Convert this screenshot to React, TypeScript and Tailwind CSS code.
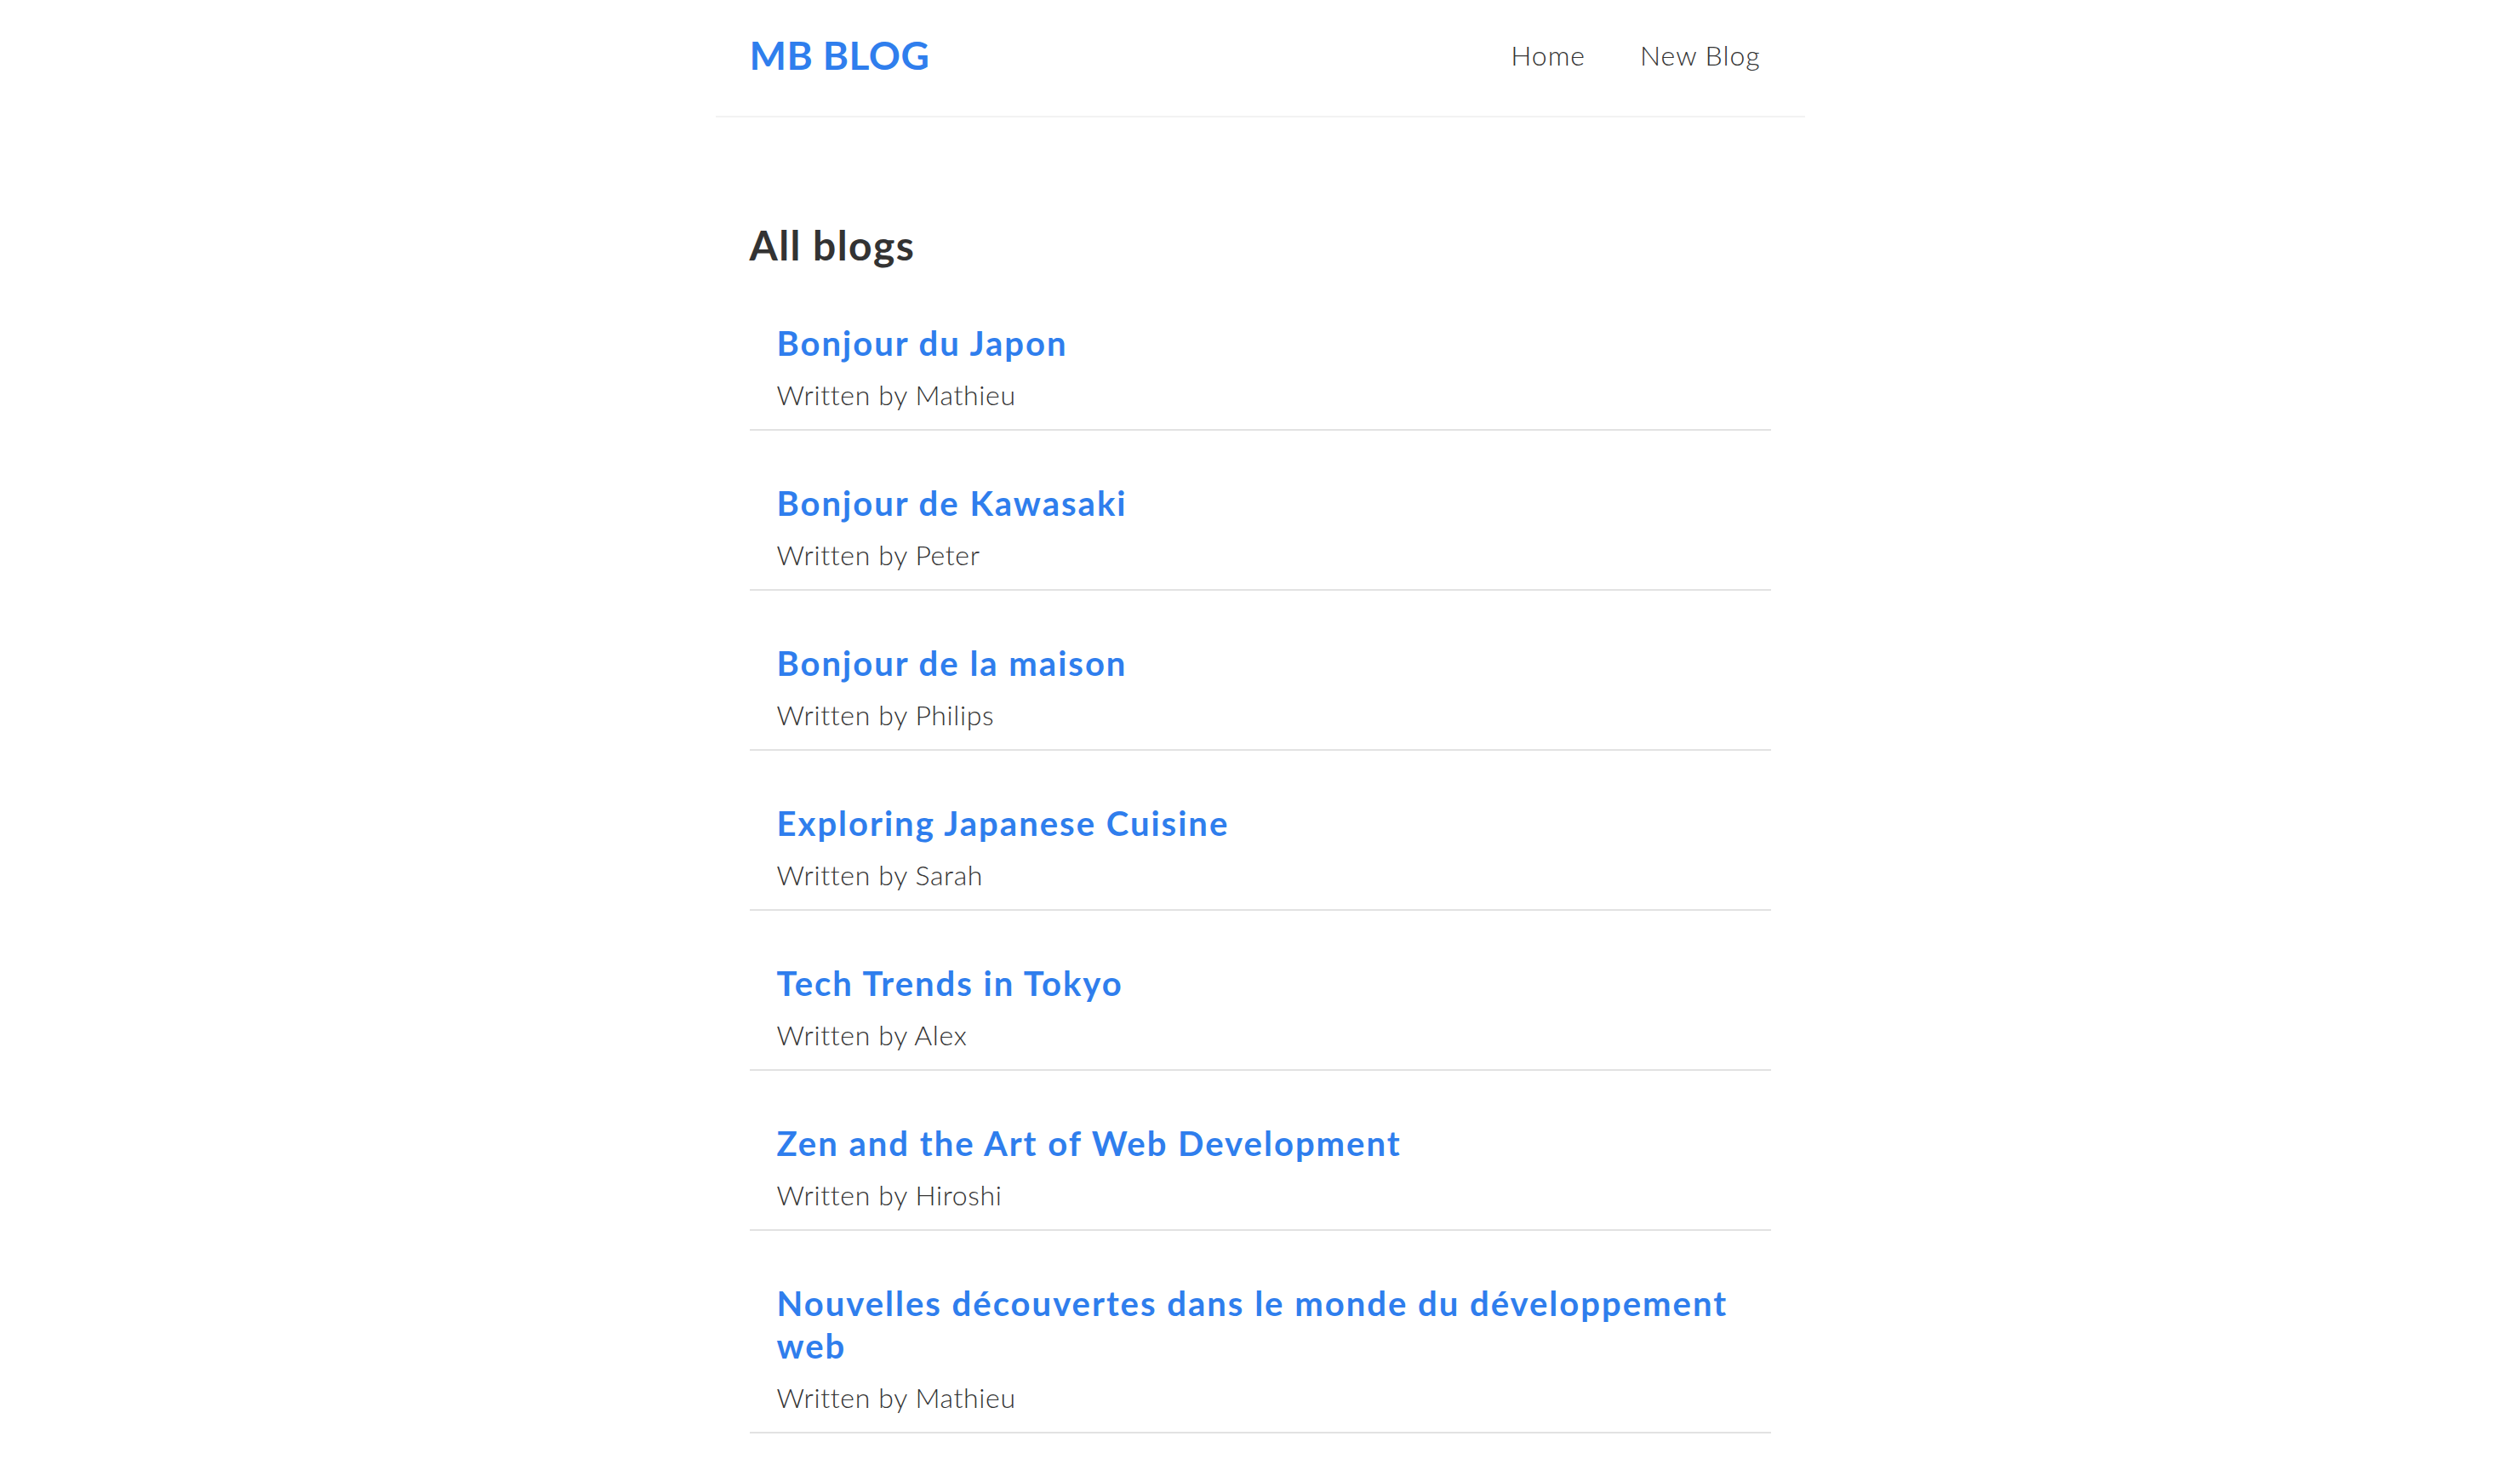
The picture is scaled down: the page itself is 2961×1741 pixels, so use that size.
const blogs = [
  { id: 1, title: "Bonjour du Japon", author: "Mathieu" },
  { id: 2, title: "Bonjour de Kawasaki", author: "Peter" },
  { id: 3, title: "Bonjour de la maison", author: "Philips" },
  { id: 4, title: "Exploring Japanese Cuisine", author: "Sarah" },
  { id: 5, title: "Tech Trends in Tokyo", author: "Alex" },
  { id: 6, title: "Zen and the Art of Web Development", author: "Hiroshi" },
  {
    id: 7,
    title: "Nouvelles découvertes dans le monde du développement web",
    author: "Mathieu",
  },
];

function Navbar() {
  return (
    <nav className="mx-auto flex h-[138px] w-[1280px] items-center border-b-2 border-[#f2f2f2] px-10 pb-[6px]">
      <h1 className="text-[46px] font-bold leading-[1.25] tracking-[0.01em] text-[#2f7eed]">
        MB BLOG
      </h1>
      <div className="ml-auto flex">
        <a
          href="/"
          className="px-3 text-[32px] font-light leading-[1.25] tracking-[0.03em] text-[#333]"
        >
          Home
        </a>
        <a
          href="/create"
          className="ml-[40px] px-3 text-[32px] font-light leading-[1.25] tracking-[0.03em] text-[#333]"
        >
          New Blog
        </a>
      </div>
    </nav>
  );
}

function BlogList() {
  return (
    <div>
      <h2 className="text-[48px] font-bold leading-[1.25] tracking-[0.03em] text-[#333]">
        All blogs
      </h2>
      {blogs.map((blog) => (
        <div
          key={blog.id}
          className="mt-10 border-b-2 border-[#e2e2e2] px-8 py-5"
        >
          <h2 className="mb-4 text-[40px] font-bold leading-[1.25] tracking-[0.05em] text-[#2f7eed]">
            {blog.title}
          </h2>
          <p className="text-[32px] font-light leading-[1.25] tracking-[0.02em] text-[#333]">
            Written by {blog.author}
          </p>
        </div>
      ))}
    </div>
  );
}

export default function App() {
  return (
    <div className="min-h-screen bg-white font-['Lato',sans-serif]">
      <Navbar />
      <main className="mx-auto mt-20 w-[1280px] p-10">
        <BlogList />
      </main>
    </div>
  );
}
